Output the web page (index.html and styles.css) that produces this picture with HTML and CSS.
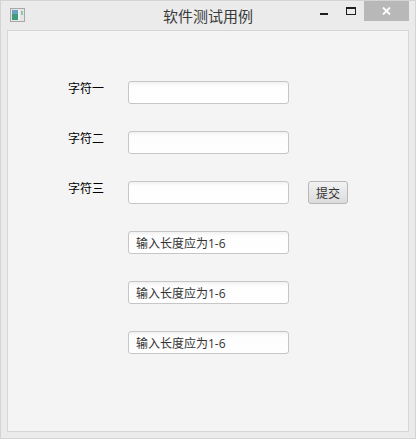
FILE: index.html
```html
<!DOCTYPE html>
<html lang="zh-CN">
<head>
<meta charset="utf-8">
<title>软件测试用例</title>
<link rel="stylesheet" href="styles.css">
</head>
<body>
<div class="window">
  <header class="titlebar">
    <svg class="app-icon" width="15" height="14" viewBox="0 0 15 14">
      <rect x="0.5" y="0.5" width="14" height="13" fill="#e4e6e6" stroke="#a8a8a8"/>
      <rect x="2" y="2" width="6" height="10" fill="#3f9a80"/>
      <rect x="2" y="2" width="6" height="4" fill="#6f9fc0"/>
      <rect x="8" y="2" width="2" height="10" fill="#f2f2f2"/>
      <rect x="11" y="3" width="2" height="4" fill="#8fc4b8"/>
    </svg>
    <h1 class="title">软件测试用例</h1>
    <div class="controls">
      <span class="ctl ctl-min"><i class="min-glyph"></i></span>
      <span class="ctl ctl-max"><i class="max-glyph"></i></span>
      <span class="ctl ctl-close">
        <svg width="9" height="8" viewBox="0 0 9 8"><path d="M1 0.5 L8 7.5 M8 0.5 L1 7.5" stroke="#fff" stroke-width="1.8" fill="none"/></svg>
      </span>
    </div>
  </header>
  <main class="content">
    <form class="form">
      <label class="label">字符一</label>
      <input class="field" type="text">
      <span></span>
      <label class="label">字符二</label>
      <input class="field" type="text">
      <span></span>
      <label class="label">字符三</label>
      <input class="field" type="text">
      <button class="submit" type="button">提交</button>
      <span></span>
      <input class="field result" type="text" value="输入长度应为1-6">
      <span></span>
      <span></span>
      <input class="field result" type="text" value="输入长度应为1-6">
      <span></span>
      <span></span>
      <input class="field result" type="text" value="输入长度应为1-6">
      <span></span>
    </form>
  </main>
</div>
</body>
</html>
```
FILE: styles.css
```css
* { box-sizing: border-box; }
html, body { margin: 0; padding: 0; }
body {
  width: 416px;
  height: 439px;
  overflow: hidden;
  background: #ebebeb;
  font-family: "Open Sans", "Noto Sans CJK SC", sans-serif;
}
.window {
  width: 416px;
  height: 439px;
  display: flex;
  flex-direction: column;
  background: #ebebeb;
  border: 1px solid #d4d4d4;
  padding: 0 6px 6px 6px;
}
.titlebar {
  height: 29px;
  flex: none;
  position: relative;
  display: flex;
  align-items: flex-start;
  justify-content: center;
}
.app-icon {
  position: absolute;
  left: 3px;
  top: 7px;
}
.title {
  margin: 5px 0 0;
  font-size: 15px;
  line-height: 20px;
  font-weight: 400;
  color: #3a3a3a;
}
.controls {
  position: absolute;
  right: 0;
  top: 0;
  display: flex;
  height: 20px;
}
.ctl {
  display: flex;
  align-items: center;
  justify-content: center;
}
.ctl-min { width: 28px; }
.ctl-max { width: 26px; }
.ctl-close { width: 45px; background: #b8b8b8; }
.min-glyph {
  display: block;
  width: 8px;
  height: 2px;
  background: #1f1f1f;
  position: relative;
  top: 3px;
}
.max-glyph {
  display: block;
  width: 10px;
  height: 8px;
  border: 1px solid #1f1f1f;
  border-top-width: 2px;
}
.content {
  flex: 1;
  background: #f4f4f4;
  border: 1px solid #d6d6d6;
  padding: 50px 0 0 60px;
}
.form {
  display: grid;
  grid-template-columns: 60px 161px 59px;
  grid-auto-rows: 23px;
  row-gap: 27px;
  align-items: start;
}
.label {
  font-size: 12px;
  line-height: 16px;
  color: #000;
}
.field {
  width: 161px;
  height: 23px;
  margin: 0;
  padding: 0 7px;
  border: 1px solid #c6c6c6;
  border-radius: 3px;
  background: linear-gradient(#f1f1f1 0, #fdfdfd 4px, #fff 100%);
  font-family: "Open Sans", "Noto Sans CJK SC", sans-serif;
  font-size: 12px;
  color: #333;
  outline: none;
}
.submit {
  justify-self: end;
  width: 40px;
  height: 23px;
  margin: 0;
  padding: 0;
  border: 1px solid #b8b8b8;
  border-radius: 3px;
  background: linear-gradient(#f2f2f2, #dcdcdc);
  font-family: "Open Sans", "Noto Sans CJK SC", sans-serif;
  font-size: 12px;
  color: #333;
}
```
